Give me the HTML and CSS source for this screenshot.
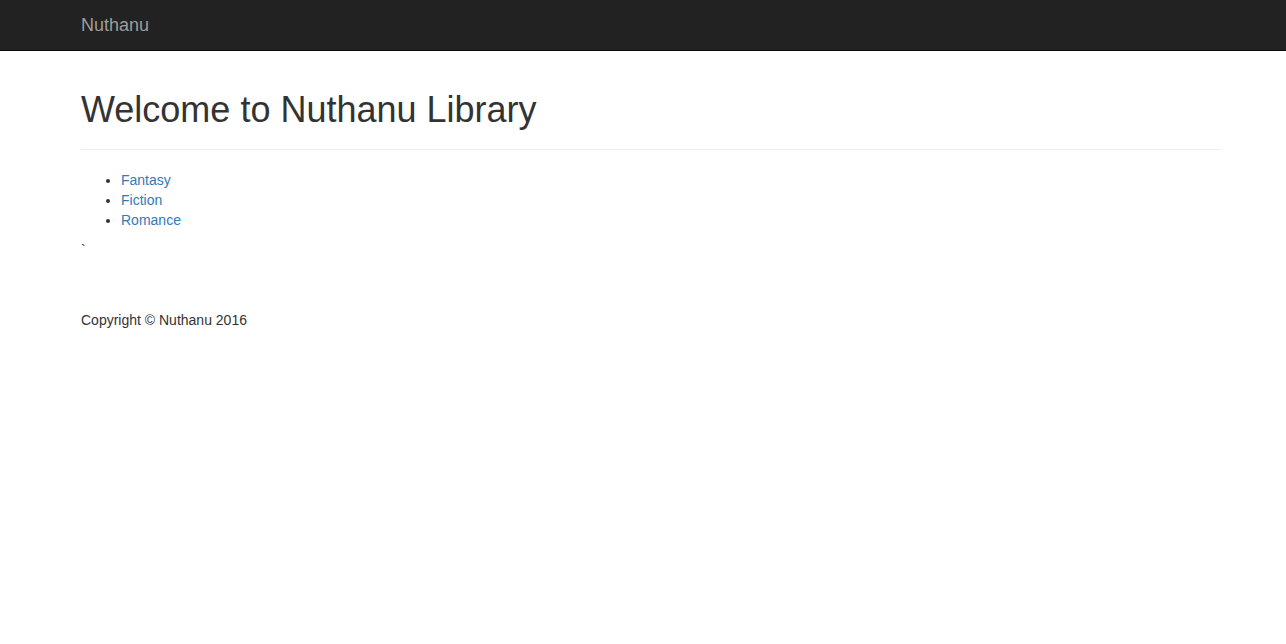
FILE: index.html
```html
<!DOCTYPE html>
<html lang="en">
<head>
<meta charset="utf-8">
<title>Nuthanu Library</title>
<link rel="stylesheet" href="styles.css">
</head>
<body>
<nav class="navbar">
  <div class="container">
    <a class="brand" href="#">Nuthanu</a>
  </div>
</nav>
<main class="container">
  <h1 class="title">Welcome to Nuthanu Library</h1>
  <hr class="rule">
  <ul class="genres">
    <li><a href="#">Fantasy</a></li>
    <li><a href="#">Fiction</a></li>
    <li><a href="#">Romance</a></li>
  </ul>
  <p class="tick">`</p>
  <footer class="footer">
    <p>Copyright &copy; Nuthanu 2016</p>
  </footer>
</main>
</body>
</html>
```

FILE: styles.css
```css
* { box-sizing: border-box; }
html, body { margin: 0; padding: 0; }
body {
  font-family: "Liberation Sans", Arial, Helvetica, sans-serif;
  font-size: 14px;
  line-height: 20px;
  color: #333;
  background: #fff;
}
.container {
  width: 1170px;
  padding: 0 15px;
  margin-left: 66px;
}
.navbar {
  height: 51px;
  background: #222;
  border-bottom: 1px solid #080808;
}
.brand {
  display: inline-block;
  height: 50px;
  padding: 15px 0;
  font-size: 18px;
  line-height: 20px;
  color: #9d9d9d;
  text-decoration: none;
}
.title {
  margin: 39px 0 10px;
  font-size: 36px;
  font-weight: 500;
  line-height: 1.1;
  color: #333;
}
.rule {
  margin: 19px 0 20px;
  border: 0;
  border-top: 1px solid #eee;
}
.genres {
  margin: 0 0 10px;
  padding-left: 40px;
}
.genres a {
  color: #337ab7;
  text-decoration: none;
}
.tick {
  margin: 0 0 10px;
}
.footer {
  padding-top: 40px;
}
.footer p {
  margin: 0;
}
```
